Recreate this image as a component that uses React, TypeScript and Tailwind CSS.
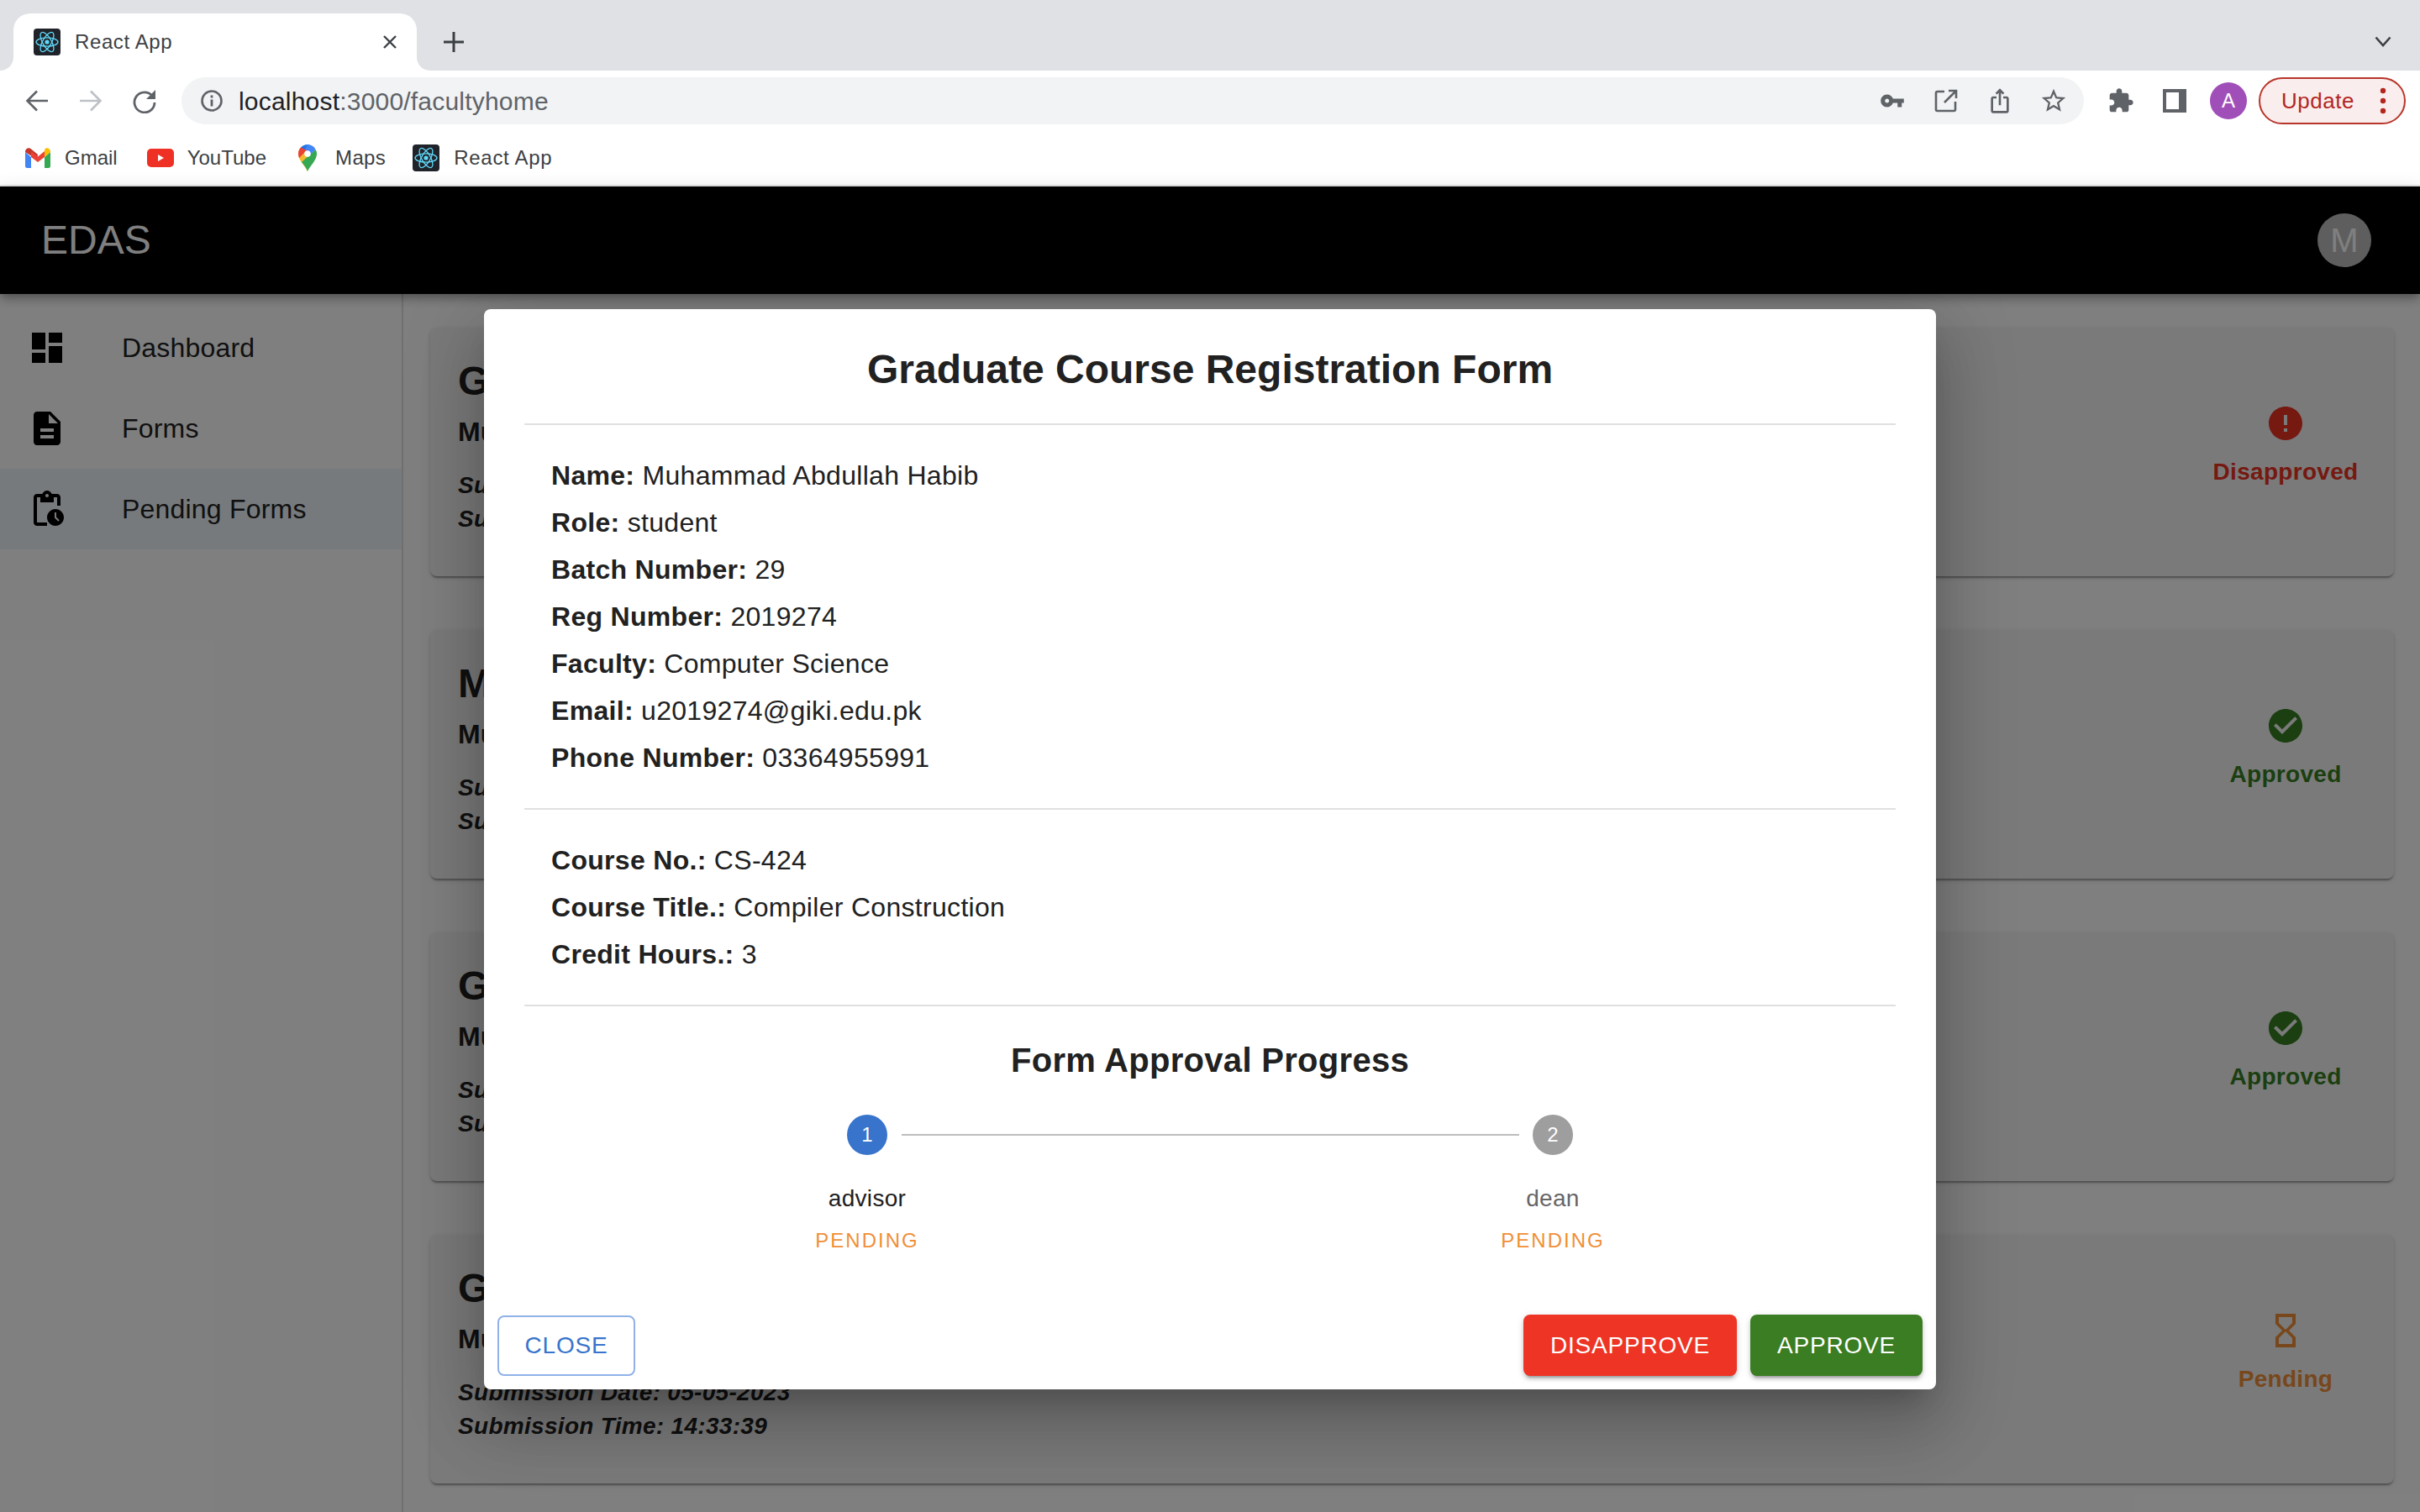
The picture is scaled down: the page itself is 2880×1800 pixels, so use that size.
import React from "react";

const P = {
  dashboard: "M3 13h8V3H3v10zm0 8h8v-6H3v6zm10 0h8V11h-8v10zm0-18v6h8V3h-8z",
  doc: "M14 2H6c-1.1 0-1.99.9-1.99 2L4 20c0 1.1.89 2 1.99 2H18c1.1 0 2-.9 2-2V8l-6-6zm2 16H8v-2h8v2zm0-4H8v-2h8v2zm-3-5V3.5L18.5 9H13z",
  pending: "M17 12c-2.76 0-5 2.24-5 5s2.24 5 5 5 5-2.24 5-5-2.24-5-5-5zm1.65 7.35L16.5 17.2V14h1v2.79l1.85 1.85-.7.71zM18 3h-3.18C14.4 1.84 13.3 1 12 1s-2.4.84-2.82 2H6c-1.1 0-2 .9-2 2v15c0 1.1.9 2 2 2h6v-2H6V5h2v3h8V5h2v5h2V5c0-1.1-.9-2-2-2zm-6 2c-.55 0-1-.45-1-1s.45-1 1-1 1 .45 1 1-.45 1-1 1z",
  error: "M12 2C6.48 2 2 6.48 2 12s4.48 10 10 10 10-4.48 10-10S17.52 2 12 2zm1 15h-2v-2h2v2zm0-4h-2V7h2v6z",
  check: "M12 2C6.48 2 2 6.48 2 12s4.48 10 10 10 10-4.48 10-10S17.52 2 12 2zm-2 15l-5-5 1.41-1.41L10 14.17l7.59-7.59L19 8l-9 9z",
  hourglass: "M6 2v6h.01L6 8.01 10 12l-4 4 .01.01H6V22h12v-5.99h-.01L18 16l-4-4 4-3.99-.01-.01H18V2H6zm10 14.5V20H8v-3.5l4-4 4 4zm-4-5l-4-4V4h8v3.5l-4 4z",
  key: "M12.65 10C11.83 7.67 9.61 6 7 6c-3.31 0-6 2.69-6 6s2.69 6 6 6c2.61 0 4.83-1.67 5.65-4H17v4h4v-4h2v-4H12.65zM7 14c-1.1 0-2-.9-2-2s.9-2 2-2 2 .9 2 2-.9 2-2 2z",
  share: "M16 5l-1.42 1.42-1.59-1.59V16h-1.98V4.83L9.42 6.42 8 5l4-4 4 4zm4 5v11c0 1.1-.9 2-2 2H6c-1.11 0-2-.9-2-2V10c0-1.11.89-2 2-2h3v2H6v11h12V10h-3V8h3c1.1 0 2 .89 2 2z",
  star: "M22 9.24l-7.19-.62L12 2 9.19 8.63 2 9.24l5.46 4.73L5.82 21 12 17.27 18.18 21l-1.63-7.03L22 9.24zM12 15.4l-3.76 2.27 1-4.28-3.32-2.88 4.38-.38L12 6.1l1.71 4.04 4.38.38-3.32 2.88 1 4.28L12 15.4z",
  puzzle: "M20.5 11H19V7c0-1.1-.9-2-2-2h-4V3.5C13 2.12 11.88 1 10.5 1S8 2.12 8 3.5V5H4c-1.1 0-1.99.9-1.99 2v3.8H3.5c1.49 0 2.7 1.21 2.7 2.7s-1.21 2.7-2.7 2.7H2V20c0 1.1.9 2 2 2h3.8v-1.5c0-1.49 1.21-2.7 2.7-2.7 1.49 0 2.7 1.21 2.7 2.7V22H17c1.1 0 2-.9 2-2v-4h1.5c1.38 0 2.5-1.12 2.5-2.5S21.88 11 20.5 11z",
};

function Mi({ d, size = 48, color = "#000" }: { d: string; size?: number; color?: string }) {
  return (
    <svg width={size} height={size} viewBox="0 0 24 24" fill={color} className="shrink-0">
      <path d={d} />
    </svg>
  );
}

function ReactFav() {
  return (
    <svg width="32" height="32" viewBox="0 0 32 32" className="shrink-0">
      <rect width="32" height="32" rx="4" fill="#20232a" />
      <g fill="none" stroke="#61dafb" strokeWidth="1.3">
        <ellipse cx="16" cy="16" rx="13" ry="5.2" />
        <ellipse cx="16" cy="16" rx="13" ry="5.2" transform="rotate(60 16 16)" />
        <ellipse cx="16" cy="16" rx="13" ry="5.2" transform="rotate(120 16 16)" />
      </g>
      <circle cx="16" cy="16" r="2.6" fill="#61dafb" />
    </svg>
  );
}

function Gmail() {
  return (
    <svg width="30" height="24" viewBox="0 0 30 24" className="shrink-0">
      <path d="M0 5v16.5A2.5 2.5 0 0 0 2.5 24H7V11z" fill="#4285f4" />
      <path d="M30 5v16.5a2.5 2.5 0 0 1-2.5 2.5H23V11z" fill="#34a853" />
      <path d="M0 4.5C0 1 4 -1 6.8 1.2L15 8l-1 6L0 5z" fill="#c5352a" />
      <path d="M7 4l8 6.4L23 4v7l-8 6-8-6z" fill="#ea4335" />
      <path d="M23 3.8l.4-2.6C26 -1 30 1 30 4.5V5l-7 6z" fill="#fbbc04" />
    </svg>
  );
}

function YouTube() {
  return (
    <svg width="32" height="24" viewBox="0 0 32 24" className="shrink-0">
      <rect width="32" height="22" y="1" rx="5" fill="#ee3124" />
      <path d="M13 8l7 4-7 4z" fill="#fff" />
    </svg>
  );
}

function Maps() {
  return (
    <svg width="22" height="32" viewBox="0 0 22 32" className="shrink-0">
      <path d="M11 32C8 25 0 19 0 11c0-3 1-5.500 3-7.500L11 11z" fill="#f4b92e" />
      <path d="M11 32c3-7 11-13 11-21 0-2-.5-3.500-1.500-5L4 21c3 4 6 7 7 11z" fill="#35a853" />
      <path d="M3 3.500L8 8.500 14 2 11 0C8 0 5 1.500 3 3.500z" fill="#1f73e8" />
      <path d="M11 0c4 0 8 2.500 9.500 6L14.500 12 8 6z" fill="#4285f4" />
      <path d="M3 3.500C1 5.500 0 8 0 11c0 2 .5 3.500 1 5l9-9z" fill="#ea4335" />
      <circle cx="11" cy="11" r="3.800" fill="#fff" />
    </svg>
  );
}

function Bookmark({ icon, label, className, labelClass = "" }: { icon: React.ReactNode; label: string; className: string; labelClass?: string }) {
  return (
    <div className={"flex items-center " + className}>
      {icon}
      <span className={"text-[24px] text-[#3c4043] " + labelClass}>{label}</span>
    </div>
  );
}

function ToolBtn({ children }: { children: React.ReactNode }) {
  return <div className="flex h-14 w-16 shrink-0 items-center justify-center">{children}</div>;
}

function Chrome() {
  return (
    <div className="shrink-0">
      <div className="flex h-[84px] items-end bg-[#dfe1e5] pl-4">
        <div className="relative flex h-[68px] w-[480px] items-center rounded-t-[20px] bg-white pl-6">
          <svg width="16" height="16" viewBox="0 0 16 16" className="absolute bottom-0 -left-4">
            <path d="M16 0v16H0C9 16 16 9 16 0z" fill="#fff" />
          </svg>
          <svg width="16" height="16" viewBox="0 0 16 16" className="absolute -right-4 bottom-0">
            <path d="M0 0v16h16C7 16 0 9 0 0z" fill="#fff" />
          </svg>
          <ReactFav />
          <span className="ml-[17px] text-[24px] tracking-[0.6px] text-[#3c4043]">React App</span>
          <svg width="20" height="20" viewBox="0 0 20 20" className="absolute top-6 right-[22px]" stroke="#3c4043" strokeWidth="2.400">
            <path d="M3 3l14 14M17 3L3 17" />
          </svg>
        </div>
        <div className="flex h-[68px] w-[88px] items-center justify-center">
          <svg width="26" height="26" viewBox="0 0 26 26" stroke="#3c4043" strokeWidth="3">
            <path d="M13 1v24M1 13h24" />
          </svg>
        </div>
        <div className="flex h-[68px] flex-1 items-center justify-end pr-[34px]">
          <svg width="20" height="14" viewBox="0 0 20 14" fill="none" stroke="#3c4043" strokeWidth="2.600">
            <path d="M1.500 1.500L10 11l8.500-9.500" />
          </svg>
        </div>
      </div>
      <div className="flex h-[72px] items-center bg-white pl-3">
        <ToolBtn>
          <svg width="28" height="26" viewBox="0 0 28 26" fill="none" stroke="#5f6368" strokeWidth="2.600">
            <path d="M27 13H3M14 1.500L2.500 13 14 24.500" />
          </svg>
        </ToolBtn>
        <ToolBtn>
          <svg width="28" height="26" viewBox="0 0 28 26" fill="none" stroke="#bdc1c6" strokeWidth="2.600">
            <path d="M1 13h24M14 1.500L25.500 13 14 24.500" />
          </svg>
        </ToolBtn>
        <ToolBtn>
          <svg width="30" height="30" viewBox="0 0 30 30" fill="none">
            <path d="M24.500 9.500A12 12 0 1 0 27 17" stroke="#5f6368" strokeWidth="2.800" />
            <path d="M28 2v11H17z" fill="#5f6368" />
          </svg>
        </ToolBtn>
        <div className="ml-3 flex h-14 w-[2264px] shrink-0 items-center rounded-full bg-[#f1f3f4] pr-1 pl-[22px]">
          <svg width="28" height="28" viewBox="0 0 28 28" fill="none" className="shrink-0">
            <circle cx="14" cy="14" r="11.500" stroke="#5f6368" strokeWidth="2.600" />
            <path d="M14 12.500v8M14 7.500v3" stroke="#5f6368" strokeWidth="2.800" />
          </svg>
          <span className="ml-[18px] text-[30px] tracking-[0.2px] text-[#5f6368]">
            <span className="text-[#202124]">localhost</span>:3000/facultyhome
          </span>
          <div className="ml-auto flex">
            <ToolBtn><Mi d={P.key} size={30} color="#5f6368" /></ToolBtn>
            <ToolBtn>
              <svg width="28" height="28" viewBox="0 0 28 28" fill="none" stroke="#5f6368" strokeWidth="2.600">
                <path d="M12 3H3.500A1.500 1.500 0 0 0 2 4.500v20A1.500 1.500 0 0 0 3.500 26h20a1.500 1.500 0 0 0 1.500-1.500V15" />
                <path d="M17 2h9v9M26 2L12 16" />
              </svg>
            </ToolBtn>
            <ToolBtn><Mi d={P.share} size={32} color="#5f6368" /></ToolBtn>
            <ToolBtn><Mi d={P.star} size={34} color="#5f6368" /></ToolBtn>
          </div>
        </div>
        <div className="ml-3 flex items-center">
          <ToolBtn><Mi d={P.puzzle} size={32} color="#5f6368" /></ToolBtn>
          <ToolBtn>
            <svg width="28" height="28" viewBox="0 0 28 28">
              <path fillRule="evenodd" d="M0 0h28v28H0zM4 4v20h15V4z" fill="#5f6368" />
            </svg>
          </ToolBtn>
          <ToolBtn>
            <div className="flex h-11 w-11 items-center justify-center rounded-full bg-[#a04fb8] text-[24px] text-white">A</div>
          </ToolBtn>
          <div className="ml-1 flex h-14 w-[175px] items-center rounded-full border-2 border-[#b8352a] bg-[#f9eded] pl-[25px] text-[26px] tracking-[0.5px] text-[#b3261e]">
            Update
            <svg width="8" height="36" viewBox="0 0 8 36" fill="#b3261e" className="ml-[30px]">
              <circle cx="4" cy="6" r="3.200" />
              <circle cx="4" cy="18" r="3.200" />
              <circle cx="4" cy="30" r="3.200" />
            </svg>
          </div>
        </div>
      </div>
      <div className="flex h-[66px] items-center border-b-2 border-[#e3e3e3] bg-white pl-[30px]">
        <Bookmark icon={<Gmail />} label="Gmail" className="gap-[17px]" />
        <Bookmark icon={<YouTube />} label="YouTube" className="ml-[35px] gap-[16px]" />
        <Bookmark icon={<Maps />} label="Maps" className="ml-[38px] gap-[22px]" labelClass="tracking-[0.4px]" />
        <Bookmark icon={<ReactFav />} label="React App" className="ml-[32px] gap-[17px]" labelClass="tracking-[0.7px]" />
      </div>
    </div>
  );
}

function SideItem({ d, label, active }: { d: string; label: string; active?: boolean }) {
  return (
    <div className={"flex h-24 items-center pl-8 " + (active ? "bg-[#edf4fb]" : "")}>
      <Mi d={d} />
      <span className="ml-[65px] text-[32px] tracking-[0.2px] text-[#212121]">{label}</span>
    </div>
  );
}

type St = "no" | "ok" | "wait";

function Card({ title, status }: { title: string; status: St }) {
  const s = {
    no: { d: P.error, label: "Disapproved", c: "#ea3323", cls: "text-[#ea3323]" },
    ok: { d: P.check, label: "Approved", c: "#377e22", cls: "text-[#377e22]" },
    wait: { d: P.hourglass, label: "Pending", c: "#f08f37", cls: "text-[#f08f37]" },
  }[status];
  return (
    <div className="flex h-[296px] shrink-0 justify-between rounded-lg bg-[#f5f5f5] pl-[33px] shadow-[0_4px_2px_-2px_rgba(0,0,0,.2),0_2px_2px_0_rgba(0,0,0,.14),0_2px_6px_0_rgba(0,0,0,.12)]">
      <div className="pt-[36px] text-[#212121]">
        <div className="text-[48px] leading-[56px] font-bold">{title}</div>
        <div className="mt-[12px] text-[32px] leading-10 font-bold">Muhammad Abdullah Habib</div>
        <div className="mt-[24px] text-[28px] leading-10 font-bold tracking-[0.3px] italic">Submission Date: 05-05-2023</div>
        <div className="text-[28px] leading-10 font-bold tracking-[0.3px] italic">Submission Time: 14:33:39</div>
      </div>
      <div className="flex w-[258px] flex-col items-center pt-[90px]">
        <Mi d={s.d} color={s.c} />
        <div className={"mt-[14px] text-[28px] leading-10 font-bold tracking-[0.3px] " + s.cls}>{s.label}</div>
      </div>
    </div>
  );
}

function Row({ k, v }: { k: string; v: string }) {
  return (
    <div className="flex h-14 items-center text-[32px] tracking-[0.3px] text-[#212121]">
      <span>
        <b>{k}:</b> {v}
      </span>
    </div>
  );
}

function Step({ n, label, active }: { n: string; label: string; active?: boolean }) {
  return (
    <div className="flex w-[160px] shrink-0 flex-col items-center">
      <div className={"flex h-12 w-12 items-center justify-center rounded-full text-[24px] text-white " + (active ? "bg-[#3874cb]" : "bg-[#9e9e9e]")}>{n}</div>
      <div className={"mt-[34px] text-[28px] leading-[36px] tracking-[0.3px] " + (active ? "text-[#212121]" : "text-[#666666]")}>{label}</div>
      <div className="mt-[14px] text-[24px] leading-[36px] tracking-[2px] text-[#f08f37]">PENDING</div>
    </div>
  );
}

const btnShadow = "shadow-[0_6px_2px_-4px_rgba(0,0,0,.2),0_4px_4px_0_rgba(0,0,0,.14),0_2px_10px_0_rgba(0,0,0,.12)]";

function Modal() {
  return (
    <div className="flex h-[1286px] w-[1728px] flex-col rounded-lg bg-white shadow-[0_22px_30px_-14px_rgba(0,0,0,.2),0_48px_76px_6px_rgba(0,0,0,.14),0_18px_92px_16px_rgba(0,0,0,.12)]">
      <div className="flex flex-col px-12">
        <div className="flex h-[136px] items-start justify-center pt-[44px] text-[48px] leading-[56px] font-bold text-[#212121]">
          Graduate Course Registration Form
        </div>
        <div className="h-[2px] bg-[#e0e0e0]" />
        <div className="p-8">
          <Row k="Name" v="Muhammad Abdullah Habib" />
          <Row k="Role" v="student" />
          <Row k="Batch Number" v="29" />
          <Row k="Reg Number" v="2019274" />
          <Row k="Faculty" v="Computer Science" />
          <Row k="Email" v="u2019274@giki.edu.pk" />
          <Row k="Phone Number" v="03364955991" />
        </div>
        <div className="h-[2px] bg-[#e0e0e0]" />
        <div className="p-8">
          <Row k="Course No." v="CS-424" />
          <Row k="Course Title." v="Compiler Construction" />
          <Row k="Credit Hours." v="3" />
        </div>
        <div className="h-[2px] bg-[#e0e0e0]" />
        <div className="mt-[39px] text-center text-[40px] leading-[50px] font-bold tracking-[0.3px] text-[#212121]">Form Approval Progress</div>
        <div className="mt-[40px] flex items-start justify-center">
          <Step n="1" label="advisor" active />
          <div className="mt-[23px] -mr-[40px] -ml-[39px] h-[2px] w-[735px] shrink-0 bg-[#bdbdbd]" />
          <Step n="2" label="dean" />
        </div>
      </div>
      <div className="mt-auto flex items-center p-4">
        <div className="flex h-[72px] w-[164px] items-center justify-center rounded-lg border-2 border-[#8fb2e8] text-[28px] tracking-[0.8px] text-[#3874cb]">CLOSE</div>
        <div className={"ml-auto flex h-[73px] w-[254px] items-center justify-center rounded-lg bg-[#ee3425] text-[28px] tracking-[0.8px] text-white " + btnShadow}>DISAPPROVE</div>
        <div className={"ml-4 flex h-[73px] w-[205px] items-center justify-center rounded-lg bg-[#3a7d22] text-[28px] tracking-[0.8px] text-white " + btnShadow}>APPROVE</div>
      </div>
    </div>
  );
}

export default function App() {
  return (
    <div className="flex h-[1800px] w-[2880px] flex-col overflow-hidden bg-white font-['Liberation_Sans',Arial,sans-serif]">
      <Chrome />
      <div className="relative flex min-h-0 flex-1 flex-col">
        <header className="z-10 flex h-[128px] shrink-0 items-center justify-between bg-black pr-[58px] pl-[49px] shadow-[0_4px_8px_-2px_rgba(0,0,0,.2),0_8px_10px_0_rgba(0,0,0,.14),0_2px_20px_0_rgba(0,0,0,.12)]">
          <div className="text-[48px] text-white">EDAS</div>
          <div className="flex h-16 w-16 items-center justify-center rounded-full bg-[#bdbdbd] text-[40px] text-white">M</div>
        </header>
        <div className="flex min-h-0 flex-1">
          <aside className="w-[480px] shrink-0 border-r-2 border-[#e0e0e0] pt-4">
            <SideItem d={P.dashboard} label="Dashboard" />
            <SideItem d={P.doc} label="Forms" />
            <SideItem d={P.pending} label="Pending Forms" active />
          </aside>
          <main className="flex flex-1 flex-col gap-16 pt-10 pr-[31px] pl-8">
            <Card title="Graduate Course Registration Form" status="no" />
            <Card title="Major Change Request Form" status="ok" />
            <Card title="Graduate Course Registration Form" status="ok" />
            <Card title="Graduate Course Registration Form" status="wait" />
          </main>
        </div>
        <div className="absolute inset-0 z-20 flex items-center justify-center bg-black/50">
          <Modal />
        </div>
      </div>
    </div>
  );
}
